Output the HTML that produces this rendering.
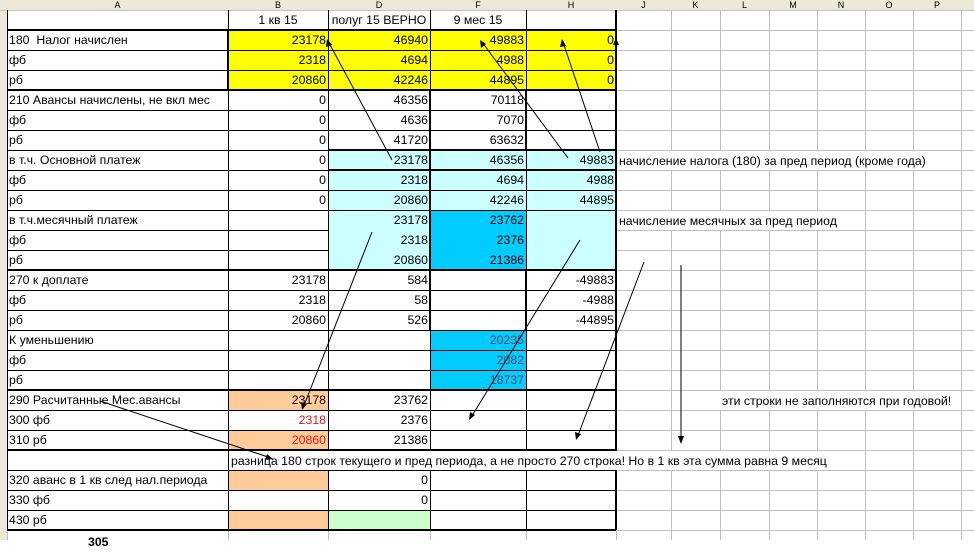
<!DOCTYPE html>
<html><head><meta charset="utf-8"><style>
body{margin:0;width:974px;height:540px;overflow:hidden;background:#fff;font-family:"Liberation Sans",Arial,sans-serif;font-size:12.3px;position:relative}
.c{position:absolute;height:20px;line-height:21px;white-space:nowrap;box-sizing:border-box;padding:0 2px;overflow:visible}
.r{text-align:right}
.h{position:absolute;top:0;height:10px;line-height:10px;font-size:9px;text-align:center;color:#000}
svg{position:absolute;left:0;top:0}
</style></head><body>
<div style="position:absolute;left:0;top:0;width:974px;height:10px;background:#ece9d8"></div>
<div style="position:absolute;left:0;top:10px;width:7px;height:530px;background:#ece9d8"></div>
<div class="h" style="left:7px;width:221px">A</div>
<div class="h" style="left:228px;width:100px">B</div>
<div class="h" style="left:328px;width:102px">D</div>
<div class="h" style="left:430px;width:96px">F</div>
<div class="h" style="left:526px;width:90px">H</div>
<div class="h" style="left:616px;width:55px">J</div>
<div class="h" style="left:671px;width:49px">K</div>
<div class="h" style="left:720px;width:49px">L</div>
<div class="h" style="left:769px;width:48px">M</div>
<div class="h" style="left:817px;width:48px">N</div>
<div class="h" style="left:865px;width:48px">O</div>
<div class="h" style="left:913px;width:48px">P</div>

<div style="position:absolute;left:228px;top:30px;width:388px;height:60px;background:#ffff00"></div>
<div style="position:absolute;left:328px;top:150px;width:288px;height:120px;background:#ccffff"></div>
<div style="position:absolute;left:430px;top:210px;width:96px;height:60px;background:#00ccff"></div>
<div style="position:absolute;left:430px;top:330px;width:96px;height:60px;background:#00ccff"></div>
<div style="position:absolute;left:228px;top:390px;width:100px;height:20px;background:#ffcc99"></div>
<div style="position:absolute;left:228px;top:430px;width:100px;height:20px;background:#ffcc99"></div>
<div style="position:absolute;left:228px;top:470px;width:100px;height:20px;background:#ffcc99"></div>
<div style="position:absolute;left:228px;top:510px;width:100px;height:20px;background:#ffcc99"></div>
<div style="position:absolute;left:328px;top:510px;width:102px;height:20px;background:#ccffcc"></div>

<svg width="974" height="540">
<g stroke="#c0c0c0" stroke-width="1">
<path d="M616.5 10V540M671.5 10V540M720.5 10V540M769.5 10V540M817.5 10V540M865.5 10V540M913.5 10V540M961.5 10V540M7.5 530V540M228.5 530V540M328.5 530V540M430.5 530V540M526.5 530V540"/>
<path d="M616 30.5H974M616 50.5H974M616 70.5H974M616 90.5H974M616 110.5H974M616 130.5H974M616 150.5H974M616 170.5H974M616 190.5H974M616 210.5H974M616 230.5H974M616 250.5H974M616 270.5H974M616 290.5H974M616 310.5H974M616 330.5H974M616 350.5H974M616 370.5H974M616 390.5H974M616 410.5H974M616 430.5H974M616 450.5H974M616 470.5H974M616 490.5H974M616 510.5H974M616 530.5H974M0 10.5H974"/>
</g>
<g stroke="#000" stroke-width="1">
<path d="M7.5 10V530M228.5 10V530M328.5 10V530M430.5 10V530M526.5 10V530"/>
<path d="M7 30.5H616M7 50.5H616M7 70.5H616M7 90.5H616M7 110.5H616M7 130.5H616M7 150.5H616M7 170.5H616M7 190.5H616M7 210.5H616M7 230.5H328M7 250.5H328M7 270.5H616M7 290.5H616M7 310.5H616M7 330.5H616M7 350.5H616M7 370.5H616M7 390.5H616M7 410.5H616M7 430.5H616M7 450.5H616M7 470.5H616M7 490.5H616M7 510.5H616M7 530.5H616"/>
</g>
<g stroke="#000" stroke-width="2">
<path d="M7 30H616M7 90H616M7 270H616M7 390H616M7 450H616M7 530H616M616 10V530M328 150H616M328 170H616M228 30V90M430 90V270M526 90V150M430 270V330M526 270V330"/>
</g>
</svg>

<div class="c" style="left:228px;top:10px;width:100px;text-align:center">1 кв 15</div>
<div class="c" style="left:328px;top:10px;width:102px;text-align:center">полуг 15 ВЕРНО</div>
<div class="c" style="left:430px;top:10px;width:96px;text-align:center">9 мес 15</div>
<div class="c" style="left:7px;top:30px">180&nbsp; Налог начислен</div>
<div class="c" style="left:7px;top:50px">фб</div>
<div class="c" style="left:7px;top:70px">рб</div>
<div class="c" style="left:7px;top:90px">210 Авансы начислены, не вкл мес</div>
<div class="c" style="left:7px;top:110px">фб</div>
<div class="c" style="left:7px;top:130px">рб</div>
<div class="c" style="left:7px;top:150px">в т.ч. Основной платеж</div>
<div class="c" style="left:7px;top:170px">фб</div>
<div class="c" style="left:7px;top:190px">рб</div>
<div class="c" style="left:7px;top:210px">в т.ч.месячный платеж</div>
<div class="c" style="left:7px;top:230px">фб</div>
<div class="c" style="left:7px;top:250px">рб</div>
<div class="c" style="left:7px;top:270px">270 к доплате</div>
<div class="c" style="left:7px;top:290px">фб</div>
<div class="c" style="left:7px;top:310px">рб</div>
<div class="c" style="left:7px;top:330px">К уменьшению</div>
<div class="c" style="left:7px;top:350px">фб</div>
<div class="c" style="left:7px;top:370px">рб</div>
<div class="c" style="left:7px;top:390px">290 Расчитанные Мес.авансы</div>
<div class="c" style="left:7px;top:410px">300 фб</div>
<div class="c" style="left:7px;top:430px">310 рб</div>
<div class="c" style="left:7px;top:470px">320 аванс в 1 кв след нал.периода</div>
<div class="c" style="left:7px;top:490px">330 фб</div>
<div class="c" style="left:7px;top:510px">430 рб</div>
<div class="c" style="left:86px;top:532px;font-weight:bold">305</div>
<div class="c r" style="left:228px;top:30px;width:100px">23178</div>
<div class="c r" style="left:228px;top:50px;width:100px">2318</div>
<div class="c r" style="left:228px;top:70px;width:100px">20860</div>
<div class="c r" style="left:228px;top:90px;width:100px">0</div>
<div class="c r" style="left:228px;top:110px;width:100px">0</div>
<div class="c r" style="left:228px;top:130px;width:100px">0</div>
<div class="c r" style="left:228px;top:150px;width:100px">0</div>
<div class="c r" style="left:228px;top:170px;width:100px">0</div>
<div class="c r" style="left:228px;top:190px;width:100px">0</div>
<div class="c r" style="left:228px;top:270px;width:100px">23178</div>
<div class="c r" style="left:228px;top:290px;width:100px">2318</div>
<div class="c r" style="left:228px;top:310px;width:100px">20860</div>
<div class="c r" style="left:228px;top:390px;width:100px">23178</div>
<div class="c r" style="left:228px;top:410px;width:100px;color:#e0141e">2318</div>
<div class="c r" style="left:228px;top:430px;width:100px;color:#e0141e">20860</div>
<div class="c r" style="left:328px;top:30px;width:102px">46940</div>
<div class="c r" style="left:328px;top:50px;width:102px">4694</div>
<div class="c r" style="left:328px;top:70px;width:102px">42246</div>
<div class="c r" style="left:328px;top:90px;width:102px">46356</div>
<div class="c r" style="left:328px;top:110px;width:102px">4636</div>
<div class="c r" style="left:328px;top:130px;width:102px">41720</div>
<div class="c r" style="left:328px;top:150px;width:102px">23178</div>
<div class="c r" style="left:328px;top:170px;width:102px">2318</div>
<div class="c r" style="left:328px;top:190px;width:102px">20860</div>
<div class="c r" style="left:328px;top:210px;width:102px">23178</div>
<div class="c r" style="left:328px;top:230px;width:102px">2318</div>
<div class="c r" style="left:328px;top:250px;width:102px">20860</div>
<div class="c r" style="left:328px;top:270px;width:102px">584</div>
<div class="c r" style="left:328px;top:290px;width:102px">58</div>
<div class="c r" style="left:328px;top:310px;width:102px">526</div>
<div class="c r" style="left:328px;top:390px;width:102px">23762</div>
<div class="c r" style="left:328px;top:410px;width:102px">2376</div>
<div class="c r" style="left:328px;top:430px;width:102px">21386</div>
<div class="c r" style="left:328px;top:470px;width:102px">0</div>
<div class="c r" style="left:328px;top:490px;width:102px">0</div>
<div class="c r" style="left:430px;top:30px;width:96px">49883</div>
<div class="c r" style="left:430px;top:50px;width:96px">4988</div>
<div class="c r" style="left:430px;top:70px;width:96px">44895</div>
<div class="c r" style="left:430px;top:90px;width:96px">70118</div>
<div class="c r" style="left:430px;top:110px;width:96px">7070</div>
<div class="c r" style="left:430px;top:130px;width:96px">63632</div>
<div class="c r" style="left:430px;top:150px;width:96px">46356</div>
<div class="c r" style="left:430px;top:170px;width:96px">4694</div>
<div class="c r" style="left:430px;top:190px;width:96px">42246</div>
<div class="c r" style="left:430px;top:210px;width:96px">23762</div>
<div class="c r" style="left:430px;top:230px;width:96px">2376</div>
<div class="c r" style="left:430px;top:250px;width:96px">21386</div>
<div class="c r" style="left:430px;top:330px;width:96px;color:#604a6e">20235</div>
<div class="c r" style="left:430px;top:350px;width:96px;color:#604a6e">2082</div>
<div class="c r" style="left:430px;top:370px;width:96px;color:#604a6e">18737</div>
<div class="c r" style="left:526px;top:30px;width:90px">0</div>
<div class="c r" style="left:526px;top:50px;width:90px">0</div>
<div class="c r" style="left:526px;top:70px;width:90px">0</div>
<div class="c r" style="left:526px;top:150px;width:90px">49883</div>
<div class="c r" style="left:526px;top:170px;width:90px">4988</div>
<div class="c r" style="left:526px;top:190px;width:90px">44895</div>
<div class="c r" style="left:526px;top:270px;width:90px">-49883</div>
<div class="c r" style="left:526px;top:290px;width:90px">-4988</div>
<div class="c r" style="left:526px;top:310px;width:90px">-44895</div>
<div class="c" style="left:617px;top:151px;height:19px;background:#fff">начисление налога (180) за пред период (кроме года)</div>
<div class="c" style="left:617px;top:211px;height:19px;background:#fff">начисление месячных за пред период</div>
<div class="c" style="left:720px;top:391px;height:19px;background:#fff">эти строки не заполняются при годовой!</div>
<div class="c" style="left:229px;top:451px;height:19px;line-height:20px;background:#fff">разница 180 строк текущего и пред периода, а не просто 270 строка! Но в 1 кв эта сумма равна 9 месяц</div>

<svg width="974" height="540">
<g stroke="#000" stroke-width="1" fill="none">
<path d="M392 160L328 41"/>
<path d="M600 152L563 42"/>
<path d="M568 158L482 42"/>
<path d="M372 232L303 408"/>
<path d="M580 240L470 419"/>
<path d="M644 262L577 438"/>
<path d="M681 265V441"/>
<path d="M100 401L271 458"/>
</g>
<g fill="#000">
<polygon points="327,39 326,47 332,45"/>
<polygon points="562,39 560,47 566,46"/>
<polygon points="480,40 481,48 486,44"/>
<polygon points="616,38 613,45 619,45"/>
<polygon points="302,410 301,402 307,404"/>
<polygon points="469,420 470,412 475,415"/>
<polygon points="576,440 575,432 581,434"/>
<polygon points="681,444 678,436 684,436"/>
<polygon points="273,459 265,460 267,454"/>
</g>
</svg>
</body></html>
